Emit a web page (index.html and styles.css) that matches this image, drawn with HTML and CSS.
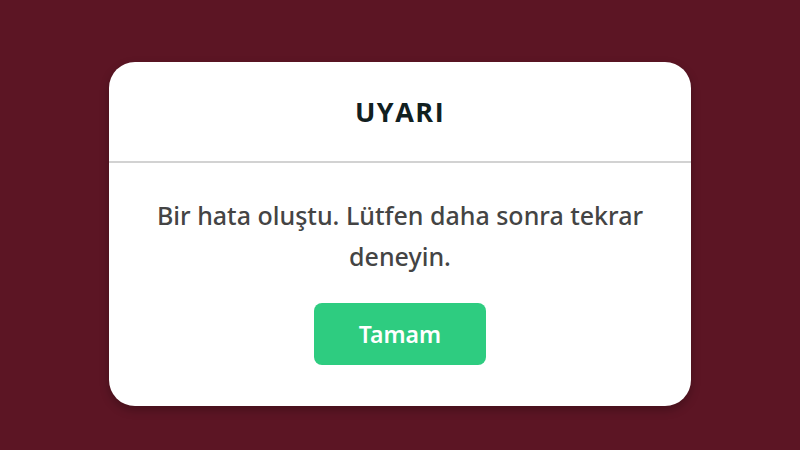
FILE: index.html
```html
<!DOCTYPE html>
<html lang="tr">
<head>
<meta charset="utf-8">
<link rel="stylesheet" href="styles.css">
</head>
<body>
<div class="dialog">
  <div class="dialog-header">
    <h1 class="dialog-title">UYARI</h1>
  </div>
  <div class="dialog-body">
    <p class="dialog-message">Bir hata oluştu. Lütfen daha sonra tekrar deneyin.</p>
    <button class="dialog-button">Tamam</button>
  </div>
</div>
</body>
</html>
```
FILE: styles.css
```css
html, body {
  margin: 0;
  padding: 0;
}
body {
  width: 800px;
  height: 450px;
  background: #5c1524;
  font-family: "Noto Sans", "Open Sans", sans-serif;
  display: flex;
  justify-content: center;
  align-items: flex-start;
  box-sizing: border-box;
  padding-top: 62px;
}
.dialog {
  width: 582px;
  height: 344px;
  background: #fff;
  border-radius: 26px;
  box-shadow: 0 4px 10px rgba(0,0,0,0.25);
  display: flex;
  flex-direction: column;
  overflow: hidden;
}
.dialog-header {
  height: 99px;
  border-bottom: 2px solid #d2d2d2;
  display: flex;
  align-items: center;
  justify-content: center;
}
.dialog-title {
  margin: 0;
  font-family: "Open Sans", "Noto Sans", sans-serif;
  font-size: 27px;
  font-weight: 700;
  letter-spacing: 1.5px;
  color: #11201f;
}
.dialog-body {
  display: flex;
  flex-direction: column;
  align-items: center;
  padding-top: 32px;
}
.dialog-message {
  margin: 0;
  width: 540px;
  text-align: center;
  font-size: 25px;
  line-height: 41px;
  font-weight: 500;
  color: #444;
}
.dialog-button {
  margin-top: 26px;
  width: 172px;
  height: 62px;
  border: none;
  border-radius: 8px;
  background: #2ecc80;
  color: #fff;
  font-family: inherit;
  font-size: 23px;
  font-weight: 600;
}
```
